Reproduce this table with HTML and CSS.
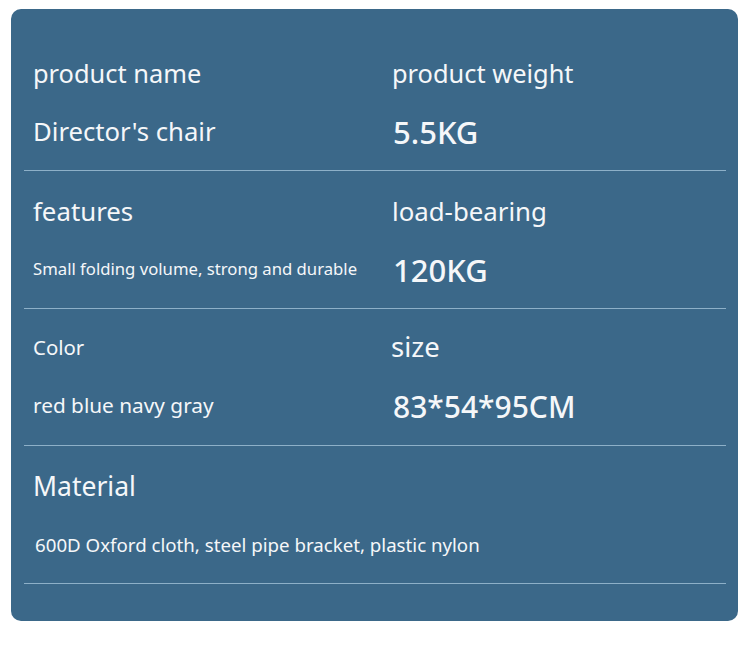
FILE: index.html
```html
<!DOCTYPE html>
<html>
<head>
<meta charset="utf-8">
<link rel="stylesheet" href="styles.css">
</head>
<body>
<div class="card">
  <div class="row">
    <div class="cell">
      <div class="label l-name">product name</div>
      <div class="value v-chair">Director's chair</div>
    </div>
    <div class="cell">
      <div class="label l-weight">product weight</div>
      <div class="value big">5.5KG</div>
    </div>
  </div>
  <div class="row">
    <div class="cell">
      <div class="label l-feat">features</div>
      <div class="value small">Small folding volume, strong and durable</div>
    </div>
    <div class="cell">
      <div class="label l-load">load-bearing</div>
      <div class="value big">120KG</div>
    </div>
  </div>
  <div class="row">
    <div class="cell">
      <div class="label l-color">Color</div>
      <div class="value v-colors">red blue navy gray</div>
    </div>
    <div class="cell">
      <div class="label l-size">size</div>
      <div class="value big b-size">83*54*95CM</div>
    </div>
  </div>
  <div class="row">
    <div class="cell">
      <div class="label l-mat">Material</div>
      <div class="value v-mat">600D Oxford cloth, steel pipe bracket, plastic nylon</div>
    </div>
  </div>
</div>
</body>
</html>
```
FILE: styles.css
```css
html, body {
  margin: 0;
  padding: 0;
  background: #ffffff;
}
body {
  width: 750px;
  height: 646px;
  font-family: "Noto Sans", "Open Sans", sans-serif;
  color: #f5f7f9;
}
.card {
  margin: 9px 12px 0 11px;
  background: #3b6889;
  border-radius: 10px;
  padding: 24px 12px 37px 13px;
}
.row {
  display: grid;
  grid-template-columns: 359px 1fr;
  padding: 25px 0 18px 9px;
  border-bottom: 1px solid #8db0c8;
}
.cell {
  display: flex;
  flex-direction: column;
}
.label {
  height: 30px;
  line-height: 30px;
  font-size: 25.4px;
  white-space: nowrap;
}
.value {
  margin-top: 24px;
  height: 40px;
  line-height: 40px;
  font-size: 25.7px;
  white-space: nowrap;
}
.big {
  font-size: 31px;
  font-weight: 500;
  padding-left: 1px;
}
.b-size {
  font-size: 30px;
  margin-top: 25px;
}
.small {
  font-size: 16.7px;
  margin-top: 23px;
}
.l-feat,
.l-load {
  font-size: 25.8px;
}
.l-color {
  font-size: 20.4px;
  margin-top: -2px;
}
.l-size {
  font-size: 27.5px;
  margin-left: -1px;
  margin-top: -2px;
}
.v-colors {
  font-size: 20.8px;
  margin-top: 23px;
}
.l-mat {
  font-size: 26.5px;
}
.v-mat {
  font-size: 18.7px;
  padding-left: 2px;
}
```
